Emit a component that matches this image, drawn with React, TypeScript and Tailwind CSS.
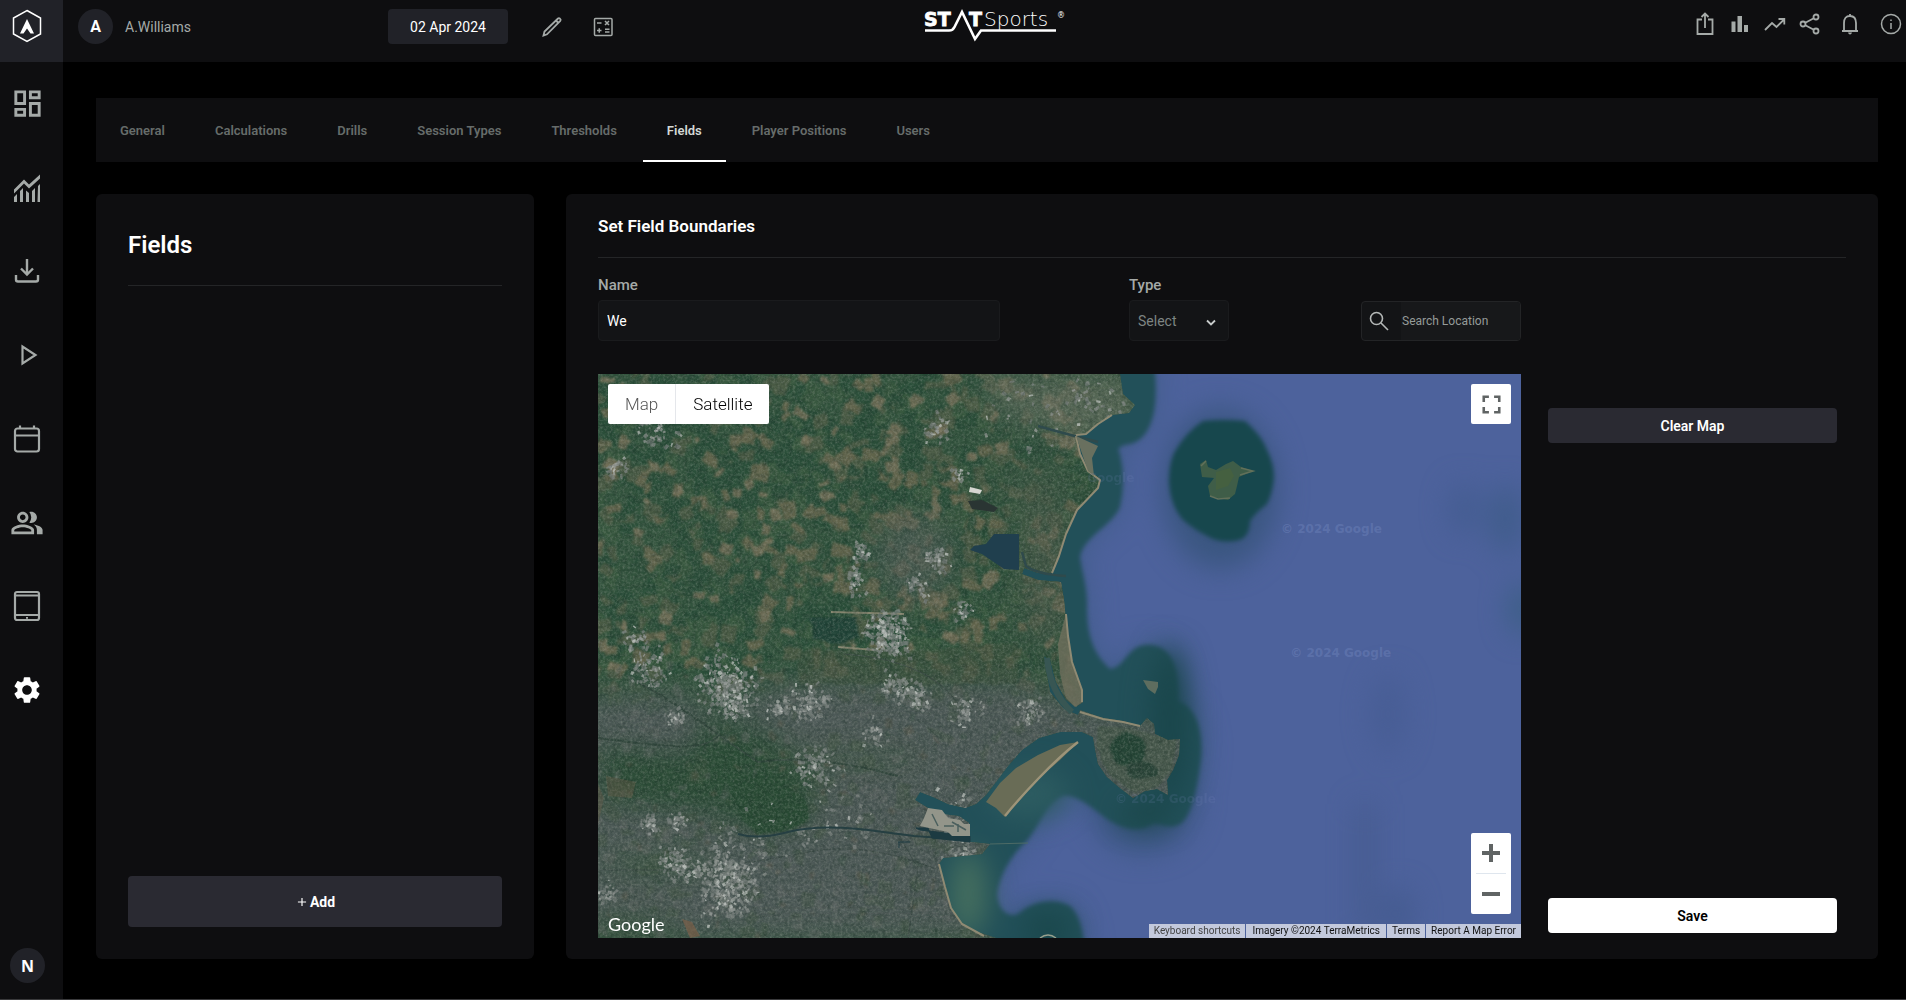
import { useState } from 'react';
import {
  MdOutlineDashboard,
  MdOutlinePeopleAlt,
  MdSettings,
  MdFullscreen,
  MdAdd,
} from 'react-icons/md';

type Point = [number, number];

const TABS = ['General', 'Calculations', 'Drills', 'Session Types', 'Thresholds', 'Fields', 'Player Positions', 'Users'];

const ChartIcon = () => (
  <svg width="28" height="28" viewBox="0 0 28 28" fill="currentColor">
    <path d="M1 15.5 L11 5.5 L16 10.5 L27 0.5 V4.5 L16 14.5 L11 9.5 L1 19.5 Z" />
    <path d="M1 23 l3-3 V28 H1 Z M7 17 l3-3 V28 H7 Z M13 16.500 l3 2.500 V28 H13 Z M19 17 l3-3 V28 H19 Z M25 12 l2-2 V28 H24.500 Z" />
  </svg>
);

const DownloadIcon = () => (
  <svg width="26" height="26" viewBox="0 0 26 26" fill="none" stroke="currentColor" strokeWidth="2.400">
    <path d="M13 1 V16 M7 10.500 L13 16.500 L19 10.500 M2 17 V21.500 Q2 23.500 4 23.500 H22 Q24 23.500 24 21.500 V17" />
  </svg>
);

const PlayIcon = () => (
  <svg width="28" height="28" viewBox="0 0 28 28" fill="none" stroke="currentColor" strokeWidth="2.200">
    <path d="M9.500 5.500 V22.500 L22.500 14 Z" />
  </svg>
);

const CalendarIcon = () => (
  <svg width="28" height="30" viewBox="0 0 28 30" fill="none" stroke="currentColor" strokeWidth="2.200">
    <rect x="2" y="4.500" width="24" height="23" rx="2.500" />
    <path d="M2 11.500 H26 M7 1.500 V5 M21 1.500 V5" />
  </svg>
);

const TabletIcon = () => (
  <svg width="28" height="32" viewBox="0 0 28 32" fill="none" stroke="currentColor" strokeWidth="2.200">
    <rect x="2" y="2" width="24" height="28" rx="2" />
    <path d="M2 5.500 H26 M2 25 H26 M13 27.800 H15" strokeWidth="1.800" />
  </svg>
);

const NAV = [
  { label: 'Dashboard', icon: <MdOutlineDashboard size={35} /> },
  { label: 'Analysis', icon: <ChartIcon /> },
  { label: 'Download', icon: <DownloadIcon /> },
  { label: 'Live', icon: <PlayIcon /> },
  { label: 'Calendar', icon: <CalendarIcon /> },
  { label: 'Squad', icon: <MdOutlinePeopleAlt size={34} /> },
  { label: 'Devices', icon: <TabletIcon /> },
  { label: 'Settings', icon: <MdSettings size={32} />, active: true },
];

const iconProps = {
  width: 24,
  height: 24,
  viewBox: '0 0 24 24',
  fill: 'none',
  stroke: 'currentColor',
  strokeWidth: 1.5,
};

const HEADER_ICONS = [
  {
    label: 'Export',
    icon: (
      <svg {...iconProps} strokeWidth={1.8}>
        <path d="M9 7.500 H4.500 V22 H19.500 V7.500 H15 M12 2 V16 M8.500 5 L12 1.500 L15.500 5" />
      </svg>
    ),
  },
  {
    label: 'Reports',
    icon: (
      <svg {...iconProps} fill="currentColor" stroke="none">
        <path d="M3.500 9.500 h4 V20 h-4 Z M9.500 4 h4.500 V20 h-4.500 Z M16 13 h4 V20 h-4 Z" />
      </svg>
    ),
  },
  {
    label: 'Trends',
    icon: (
      <svg {...iconProps} strokeWidth={1.8}>
        <path d="M2 18 L9 11 L13.500 15 L21 7.500 M15.500 7 H21.300 V12.500" />
      </svg>
    ),
  },
  {
    label: 'Share',
    icon: (
      <svg {...iconProps} strokeWidth={1.8}>
        <circle cx="5" cy="12" r="2.500" />
        <circle cx="18" cy="5" r="2.500" />
        <circle cx="18" cy="19" r="2.500" />
        <path d="M7.300 10.800 L15.800 6.200 M7.300 13.200 L15.800 17.800" />
      </svg>
    ),
  },
];

// ---- satellite imagery ----

function createRandom(seed: number) {
  let s = seed;
  return () => {
    s = (s * 1664525 + 1013904223) % 4294967296;
    return s / 4294967296;
  };
}

const rand = createRandom(2024);
const gauss = () => rand() + rand() + rand() - 1.5;

const quad = (x: number, y: number, w: number, h: number, angle: number) => {
  const c = Math.cos(angle);
  const s = Math.sin(angle);
  const corners: Point[] = [[-w, -h], [w, -h * (0.6 + rand() * 0.5)], [w * (0.6 + rand() * 0.5), h], [-w, h]];
  return 'M' + corners.map(([a, b]) => `${(x + (a * c - b * s) / 2).toFixed(1)} ${(y + (a * s + b * c) / 2).toFixed(1)}`).join('L') + 'Z';
};

const buildPatches = (count: number, size: number, top: number, bottom: number) => {
  let d = '';
  for (let i = 0; i < count; i++) {
    const y = top + rand() * (bottom - top);
    d += quad(rand() * 500, y, size * (0.4 + rand()), size * (0.4 + rand() * 0.9), (rand() - 0.3) * 1.2);
  }
  return d;
};

const FARMLAND = [
  { fill: '#2a4f3a', d: buildPatches(330, 24, 0, 300) },
  { fill: '#3b5a41', d: buildPatches(260, 16, 0, 310) },
  { fill: '#4f5d47', d: buildPatches(260, 14, 0, 320) },
  { fill: '#68674f', d: buildPatches(170, 14, 0, 300) },
  { fill: '#2a4d39', d: buildPatches(200, 12, 0, 310) },
  { fill: '#78725b', d: buildPatches(90, 11, 0, 300) },
];

const URBAN = [
  { fill: '#435744', d: buildPatches(190, 11, 310, 564) },
  { fill: '#666b6a', d: buildPatches(240, 8, 290, 564) },
  { fill: '#384f40', d: buildPatches(140, 7, 290, 564) },
  { fill: '#5e5a4b', d: buildPatches(90, 6, 290, 564) },
];

// x, y, spread, amount
const CLUSTERS: [number, number, number, number][] = [
  [127, 308, 26, 110], [138, 330, 18, 60], [212, 329, 18, 55], [131, 513, 30, 130], [118, 498, 22, 50],
  [216, 391, 18, 40], [320, 322, 12, 32], [296, 312, 14, 28], [51, 295, 18, 36], [341, 184, 12, 26],
  [290, 262, 20, 130], [78, 343, 10, 20], [263, 178, 10, 14], [258, 208, 12, 18], [367, 338, 14, 28],
  [433, 338, 12, 24], [78, 492, 16, 40], [61, 57, 18, 26], [50, 450, 10, 16], [80, 450, 10, 16],
  [320, 213, 12, 16], [362, 100, 7, 10], [365, 237, 10, 14], [8, 520, 12, 16], [140, 470, 40, 24],
  [182, 333, 12, 24], [340, 54, 14, 16], [430, 20, 60, 20], [500, 30, 34, 20], [277, 360, 12, 16],
  [18, 94, 12, 12], [40, 268, 12, 16], [350, 440, 20, 30], [360, 475, 16, 22], [240, 440, 50, 24],
];

const buildSpeckles = (size: number, share: number) => {
  let d = '';
  CLUSTERS.forEach(([cx, cy, spread, amount]) => {
    for (let i = 0; i < amount * share; i++) {
      d += quad(cx + gauss() * spread, cy + gauss() * spread, size * (0.5 + rand()), size * (0.4 + rand() * 0.8), rand() * 3);
    }
  });
  return d;
};

const SPECKLES = [
  { fill: '#7d8481', d: buildSpeckles(4, 0.9) },
  { fill: '#9ca09e', d: buildSpeckles(3, 0.6) },
  { fill: '#c6c9c5', d: buildSpeckles(3, 0.25) },
];

const SHALLOWS =
  'M440 -20H555Q560 16 556 38Q550 66 532 70Q516 72 522 80Q528 106 522 133C514 152 486 162 482 183C484 198 489 212 489 230C488 268 500 284 512 295C526 294 530 272 547 271C570 269 582 288 580 327C600 334 605 360 603 384C600 410 594 446 580 451C568 456 562 447 553 451C540 459 524 455 509 445C494 434 478 420 465 422C448 428 444 448 429 467C414 480 402 500 399 520C400 536 410 544 420 540C436 526 458 524 472 532C482 542 484 552 490 590H300V300Z';

const ISLAND_SHALLOWS =
  'M605 47Q626 45 647 47Q664 62 669 76Q676 90 676 103Q675 118 669 130Q658 138 652 147Q652 160 644 165Q630 170 615 165Q596 156 584 145Q572 130 571 108Q571 90 576 79Q588 58 605 47Z';

const MAINLAND =
  'M0 0H522L525 20L537 31L531 39L514 41L500 50L488 59L478 61L481 78L490 97L502 104L500 114L479 136L468 160L461 182L454 199L440 199L426 194L424 200L440 206L463 208L466 226L469 256L473 283L483 312L485 328L478 333L468 326L458 308L452 286L446 282L452 318L466 335L480 341L482 336L505 344L525 347L542 352L549 344L556 350L557 360L570 366L582 365L581 381L575 396L569 406L570 421L559 415L547 417L535 424L522 414L509 403L500 390L497 375L495 363L484 358L462 358L441 364L424 376L410 392L398 408L388 421L378 430L367 434L350 430L335 423L322 418L317 426L330 434L343 440L361 442L371 449L372 464L355 466L392 470L384 480L345 484L341 490L347 513L352 532L362 548L380 558L398 564H0Z';

const BULL_ISLAND = 'M480 368L462 371L440 381L418 394L402 409L388 428L398 434L407 443L422 426L440 405L462 386Z';

const SAND = [
  'M514 41L500 50L488 60L478 61',
  'M478 62L482 80L490 97L502 106L500 114L479 136L468 160L461 182L454 199',
  'M468 240L470 262L474 288L484 316L484 328',
  'M482 338L505 345L525 348L542 352',
  'M341 490L347 513L353 534L364 550L386 562',
];

const SatelliteImage = () => (
  <svg className="absolute inset-0 h-full w-full" viewBox="0 0 923 564" preserveAspectRatio="none" aria-hidden="true">
    <defs>
      <filter id="soft-1" x="-5%" y="-5%" width="110%" height="110%" colorInterpolationFilters="sRGB">
        <feGaussianBlur stdDeviation="0.7" />
      </filter>
      <filter id="soft-2" x="-20%" y="-20%" width="140%" height="140%" colorInterpolationFilters="sRGB">
        <feGaussianBlur stdDeviation="2" />
      </filter>
      <filter id="soft-16" x="-40%" y="-40%" width="180%" height="180%" colorInterpolationFilters="sRGB">
        <feGaussianBlur stdDeviation="14" />
      </filter>
      <filter id="patch" x="0" y="0" width="100%" height="100%" colorInterpolationFilters="sRGB">
        <feTurbulence type="fractalNoise" baseFrequency="0.08" numOctaves="2" seed="3" />
        <feDisplacementMap in="SourceGraphic" scale="6" xChannelSelector="R" yChannelSelector="G" />
        <feGaussianBlur stdDeviation="0.8" />
      </filter>
      <filter id="light-grain" x="0" y="0" width="100%" height="100%" colorInterpolationFilters="sRGB">
        <feTurbulence type="fractalNoise" baseFrequency="0.4" numOctaves="4" seed="8" />
        <feColorMatrix values="0 0 0 0 0.68  0 0 0 0 0.7  0 0 0 0 0.66  1.8 0 0 0 -0.72" />
      </filter>
      <filter id="dark-grain" x="0" y="0" width="100%" height="100%" colorInterpolationFilters="sRGB">
        <feTurbulence type="fractalNoise" baseFrequency="0.2" numOctaves="4" seed="21" />
        <feColorMatrix values="0 0 0 0 0.08  0 0 0 0 0.16  0 0 0 0 0.13  0 2 0 0 -0.75" />
      </filter>
      <clipPath id="land">
        <path d={MAINLAND} />
      </clipPath>
    </defs>

    <rect width="923" height="564" fill="#4d629c" />
    <g filter="url(#soft-16)">
      <path d={SHALLOWS} fill="#3d5b84" opacity="0.8" />
      <ellipse cx="622" cy="115" rx="58" ry="80" fill="#3a5680" />
      <ellipse cx="545" cy="430" rx="52" ry="48" fill="#3a5680" />
      <rect x="760" y="430" width="14" height="134" fill="#43598b" />
      <ellipse cx="790" cy="340" rx="16" ry="40" fill="#475d94" />
      <ellipse cx="866" cy="135" rx="14" ry="26" fill="#435c90" />
      <ellipse cx="908" cy="145" rx="16" ry="34" fill="#3f5c8a" />
      <ellipse cx="925" cy="235" rx="14" ry="26" fill="#3b5e84" />
      <ellipse cx="800" cy="540" rx="14" ry="26" fill="#435a8e" />
    </g>

    <path d={SHALLOWS} fill="#225059" filter="url(#soft-2)" />
    <path d={ISLAND_SHALLOWS} fill="#17474d" filter="url(#soft-2)" />
    <g filter="url(#soft-16)">
      <ellipse cx="572" cy="350" rx="20" ry="80" fill="#1a464b" />
      <ellipse cx="548" cy="440" rx="26" ry="12" fill="#1a4548" />
      <ellipse cx="370" cy="520" rx="18" ry="44" fill="#47705f" />
      <ellipse cx="430" cy="420" rx="40" ry="24" fill="#2d5c61" />
      <ellipse cx="450" cy="555" rx="26" ry="16" fill="#19464a" />
    </g>

    <g clipPath="url(#land)">
      <rect width="600" height="564" fill="#33543e" />
      <g filter="url(#patch)">
        {FARMLAND.map(({ fill, d }) => <path key={fill} d={d} fill={fill} opacity="0.85" />)}
      </g>
      <g filter="url(#soft-16)">
        <path d="M-20 326L70 318L120 336L180 312L230 308L340 310L400 306L470 324L600 350V564H-20Z" fill="#505b5a" opacity="0.95" />
        <path d="M380 0H540V60L480 70L400 40Z" fill="#656f5f" opacity="0.7" />
        <ellipse cx="316" cy="182" rx="40" ry="42" fill="#535e58" opacity="0.7" />
        <ellipse cx="446" cy="190" rx="26" ry="90" fill="#525e4f" opacity="0.6" />
        <ellipse cx="430" cy="110" rx="44" ry="24" fill="#3a5642" opacity="0.7" />
        <path d="M110 340L180 362L220 395L210 452L150 456L110 440L0 430V370L90 380Z" fill="#2c4d37" />
        <ellipse cx="60" cy="490" rx="60" ry="10" fill="#36543d" />
        <ellipse cx="30" cy="560" rx="50" ry="20" fill="#385340" />
        <ellipse cx="250" cy="385" rx="80" ry="8" fill="#405846" />
      </g>
      <g filter="url(#patch)">
        {URBAN.map(({ fill, d }) => <path key={fill} d={d} fill={fill} opacity="0.4" />)}
        <path d="M140 400L176 402L206 424L212 444L196 456L160 460L144 444L134 424Z" fill="#2a4b35" />
        <path d="M212 243H258L262 262L240 270L214 266Z" fill="#224539" />
        <path d="M200 276H330L420 268V310H200Z" fill="#40543f" opacity="0.6" />
        <path d="M500 352L540 356L580 366L572 400L560 412L536 420L508 398L498 372Z" fill="#48594d" />
        <ellipse cx="530" cy="376" rx="18" ry="16" fill="#254536" />
        <ellipse cx="544" cy="396" rx="16" ry="9" fill="#2c463a" />
      </g>
      <path d="M233 238L306 240M240 273L276 276" stroke="#86866f" strokeWidth="2" fill="none" />
      <path d="M0 364Q40 370 76 372T122 360M40 308Q80 330 122 362L160 388Q220 380 300 402" stroke="#30453b" strokeWidth="2" fill="none" opacity="0.8" />
      <path d="M0 496H90Q150 490 210 478T350 500M246 280Q330 286 360 330M300 460L320 494L310 564" stroke="#3a4845" strokeWidth="1.200" fill="none" opacity="0.7" />
      <g filter="url(#soft-1)">
        {SPECKLES.map(({ fill, d }) => <path key={fill} d={d} fill={fill} opacity="0.75" />)}
      </g>
      <rect width="600" height="564" filter="url(#dark-grain)" opacity="0.32" />
      <rect width="600" height="564" filter="url(#light-grain)" opacity="0.32" />
      <path d="M0 410L6 424L0 450Z M8 402L38 408L34 424L10 422Z" fill="#6d5c48" opacity="0.35" />
      <path d="M84 545L94 548L102 562L92 564Z" fill="#7a6048" opacity="0.7" />
    </g>

    <g filter="url(#soft-1)">
      <path d="M396 160L421 160V196L406 195L384 180L372 176L376 172L388 170Z" fill="#203f4e" />
      <path d="M370 127L384 126L400 134L396 138L374 135Z" fill="#2a3533" />
      <path d="M372 113L384 116L382 120L371 118Z" fill="#d5d6d0" />
      <path d="M424 178L428 192Q438 200 468 202M440 52Q468 60 500 68" stroke="#2f4a4c" strokeWidth="2.500" fill="none" />
      <path d="M449 284Q452 318 474 338" stroke="#385653" strokeWidth="6" fill="none" />
      <path d="M140 460Q160 466 190 458T270 456L316 462L372 466" stroke="#263f42" strokeWidth="2" fill="none" />
      <path d="M318 454H330L334 464L372 468V462L322 456Z M300 468H312M301 468V474" fill="#1d3b42" stroke="#1d3b42" />
      <path d="M330 434L344 436L350 444L362 446L366 450H372V462H354L350 458L322 452L326 444Z" fill="#93958a" />
      <path d="M346 452H356M354 448L368 456M334 440L340 452M360 450V458" stroke="#4c605e" strokeWidth="1.500" />
      <path d="M392 470L430 469" stroke="#4d6b66" strokeWidth="1.200" />

      <path d="M468 240L470 262L474 288L484 316L485 328L477 333L468 324L462 300L460 270Z" fill="#6f6f5c" opacity="0.8" />
      <path d={BULL_ISLAND} fill="#696c56" />
      <path d="M480 368Q462 382 440 405T407 442" stroke="#9d9479" strokeWidth="2.500" fill="none" />
      {SAND.map((d) => <path key={d} d={d} stroke="#8f8a73" strokeWidth="2" fill="none" strokeLinejoin="round" />)}
      <path d="M478 62L490 97L496 102L494 84L500 72Z" fill="#69705f" />

      <path d="M602 90L608 86L610 93L618 96L628 90L635 87L643 93L655 97L641 103L639 112L637 120L630 126L620 124L612 122L610 112L616 104L604 103Z" fill="#3f5d48" />
      <path d="M618 98L632 94L636 102L630 112L618 116Z" fill="#456040" />
      <path d="M643 94L655 97L642 101M612 122L620 125L632 124M603 92L608 87" stroke="#62705a" strokeWidth="1.500" fill="none" />
      <path d="M545 306L560 308V313L557 320L550 315Z" fill="#5e6d5f" />
      <path d="M442 564Q450 558 458 564" stroke="#98a08e" strokeWidth="1.500" fill="none" />
    </g>
  </svg>
);

const StatSportsLogo = () => (
  <svg className="overflow-visible" width="142" height="34" viewBox="0 0 142 34" role="img" aria-label="STATSports">
    <g fill="#ffffff" fontFamily="'DejaVu Sans', sans-serif">
      <text x="0" y="17" fontSize="19" fontWeight="700" stroke="#ffffff" strokeWidth="0.800">ST</text>
      <text x="45" y="17" fontSize="19" fontWeight="700" stroke="#ffffff" strokeWidth="0.800">T</text>
      <text x="60" y="17" fontSize="20" fontWeight="200">Sports</text>
      <text x="133" y="9" fontSize="8">®</text>
    </g>
    <path d="M1 21.500 H25 Q29 21.500 30.500 18 L38 3 L51 30 L57 21.500 H132" fill="none" stroke="#ffffff" strokeWidth="2.600" />
  </svg>
);

function FieldMap() {
  const [mapType, setMapType] = useState('Satellite');

  return (
    <div className="relative min-h-[564px] flex-1 overflow-hidden bg-[#4d629c]">
      <SatelliteImage />
      <span className="absolute left-[53%] top-[17%] font-['DejaVu_Sans'] text-xs font-bold text-[#7d90c4]/15">Google</span>
      <span className="absolute left-[74%] top-[26%] font-['DejaVu_Sans'] text-xs font-bold text-[#8296cc]/30">© 2024 Google</span>
      <span className="absolute left-[75%] top-[48%] font-['DejaVu_Sans'] text-xs font-bold text-[#8296cc]/30">© 2024 Google</span>
      <span className="absolute left-[56%] top-[74%] font-['DejaVu_Sans'] text-xs font-bold text-[#7d90c4]/15">© 2024 Google</span>

      <div className="absolute left-[10px] top-[10px] flex h-10 overflow-hidden rounded-xs bg-white text-[17px] font-light">
        {['Map', 'Satellite'].map((type) => (
          <button
            key={type}
            onClick={() => setMapType(type)}
            className={`cursor-pointer px-[17px] pt-px ${type === mapType ? 'border-l border-gray-200 text-black' : 'text-[#565656]'}`}
          >
            {type}
          </button>
        ))}
      </div>

      <button aria-label="Toggle fullscreen view" className="absolute right-[10px] top-[10px] flex size-10 cursor-pointer items-center justify-center rounded-xs bg-white text-[#606464]">
        <MdFullscreen size={31} />
      </button>

      <div className="absolute bottom-6 right-[10px] flex w-10 flex-col items-center rounded-xs bg-white text-[#606464]">
        <button aria-label="Zoom in" className="flex size-10 cursor-pointer items-center justify-center">
          <svg width="18" height="18" viewBox="0 0 18 18" fill="currentColor"><path d="M7 0h4v7h7v4h-7v7H7v-7H0V7h7z" /></svg>
        </button>
        <div className="h-px w-[30px] bg-[#dfe6ee]" />
        <button aria-label="Zoom out" className="flex size-10 cursor-pointer items-center justify-center">
          <svg width="18" height="4" viewBox="0 0 18 4" fill="currentColor"><path d="M0 0h18v4H0z" /></svg>
        </button>
      </div>

      <span className="absolute bottom-0 left-[10px] font-['Lato'] text-lg leading-7 text-white">Google</span>
      <div className="absolute bottom-0 right-0 flex h-[14px] gap-px text-[10px] leading-[14px] text-[#111111]">
        <button className="cursor-pointer bg-[#c3c9dc] px-[5px] text-[#444444]">Keyboard shortcuts</button>
        <span className="bg-[#c3c9dc] px-[6px]">Imagery ©2024 TerraMetrics</span>
        <a href="#terms" className="bg-[#c3c9dc] px-[5px]">Terms</a>
        <a href="#report" className="bg-[#c3c9dc] px-[5px]">Report A Map Error</a>
      </div>
    </div>
  );
}

export default function App() {
  const [activeTab, setActiveTab] = useState('Fields');
  const [name, setName] = useState('We');

  return (
    <div className="flex min-h-screen border-b border-[#3a3a3c] bg-black font-['Roboto',sans-serif] text-sm text-white">
      <aside className="flex w-[63px] shrink-0 flex-col items-start bg-[#0e0e10]">
        <a href="#home" aria-label="Home" className="flex h-[62px] w-full items-center bg-[#212228] pb-[10px] pl-3">
          <svg width="30" height="34" viewBox="0 0 30 34" fill="none">
            <path d="M15 1.500 L28.500 9 V25 L15 32.500 L1.500 25 V9 Z" stroke="#ffffff" strokeWidth="1.500" />
            <path d="M15 10 L22 24.500 H18.500 L15 19.500 L11.500 24.500 H8 Z" fill="#ffffff" />
          </svg>
        </a>
        <nav className="grid h-[670px] w-[54px] auto-rows-fr">
          {NAV.map(({ label, icon, active }) => (
            <button
              key={label}
              aria-label={label}
              className={`flex cursor-pointer items-center justify-center ${active ? 'text-white' : 'text-[#a5aaa8]'}`}
            >
              {icon}
            </button>
          ))}
        </nav>
        <div className="mb-4 ml-[10px] mt-auto flex size-[35px] items-center justify-center rounded-full bg-[#212228] font-['Open_Sans'] text-base font-bold">
          N
        </div>
      </aside>

      <div className="flex min-w-0 flex-1 flex-col">
        <header className="grid h-[62px] grid-cols-[1fr_auto_1fr] items-start bg-[#0e0e10] pt-[9px] text-[#a5aaa8]">
          <div className="flex items-center pl-[15px]">
            <div className="flex size-[35px] items-center justify-center rounded-full bg-[#212228] text-base font-bold text-white">A</div>
            <span className="ml-3 w-[263px]">A.Williams</span>
            <button className="h-[35px] w-[120px] cursor-pointer rounded-sm bg-[#212228] text-white">02 Apr 2024</button>
            <button aria-label="Edit" className="ml-8 cursor-pointer">
              <svg {...iconProps} strokeWidth={1.8}>
                <path d="M3.500 20.500 L4.500 16.500 L18 3.500 Q19 2.700 20 3.700 Q21.200 4.800 20.300 5.800 L7 19.300 Z M16 5.500 L18.500 8" />
              </svg>
            </button>
            <button aria-label="Calculations" className="ml-[27px] cursor-pointer">
              <svg {...iconProps}>
                <rect x="3.500" y="3.500" width="17.500" height="17" rx="1" />
                <path d="M6 8 H10.500 M14 6 L18 10 M18 6 L14 10 M6 15.500 H10.500 M8.250 13.200 V17.800 M14 14.300 H18.500 M14 17 H18.500" />
              </svg>
            </button>
          </div>
          <div className="pl-5">
            <StatSportsLogo />
          </div>
          <div className="flex items-center justify-end gap-[11px] pr-[3px] pt-[3px]">
            {HEADER_ICONS.map(({ label, icon }) => (
              <button key={label} aria-label={label} className="cursor-pointer">{icon}</button>
            ))}
            <button aria-label="Notifications" className="ml-[5px] cursor-pointer">
              <svg {...iconProps} strokeWidth={1.8}>
                <path d="M4 19 H20 M6 19 V11 Q6 4 12 4 Q18 4 18 11 V19 M12 2 V4" />
                <path d="M10 20.500 H14 Q13.500 22.500 12 22.500 Q10.500 22.500 10 20.500 Z" fill="currentColor" stroke="none" />
              </svg>
            </button>
            <button aria-label="Information" className="ml-[6px] cursor-pointer">
              <svg {...iconProps}>
                <circle cx="12" cy="12" r="9.500" />
                <path d="M12 11 V17 M12 7.500 V9" />
              </svg>
            </button>
          </div>
        </header>

        <main className="flex flex-1 flex-col gap-8 pb-10 pl-[33px] pr-7 pt-9">
          <nav className="flex h-16 shrink-0 gap-[2px] bg-[#0e0e10] text-[13px] font-semibold">
            {TABS.map((tab) => (
              <button
                key={tab}
                onClick={() => setActiveTab(tab)}
                className={`cursor-pointer border-b-2 px-6 pt-1 ${tab === activeTab ? 'border-white text-[#d4d8d6]' : 'border-transparent text-[#666c6a]'}`}
              >
                {tab}
              </button>
            ))}
          </nav>

          <div className="flex flex-1 gap-8">
            <section className="flex w-[438px] shrink-0 flex-col rounded-md bg-[#0e0e10] p-8">
              <h1 className="border-b border-[#242527] pb-6 pt-[3px] text-2xl font-semibold leading-8">Fields</h1>
              <button className="mt-auto h-[51px] cursor-pointer rounded-sm bg-[#2a2a32] pt-[2px] font-bold">
                <span className="inline-flex items-center gap-px"><MdAdd size={14} />Add</span>
              </button>
            </section>

            <section className="flex min-w-0 flex-1 flex-col rounded-md bg-[#0e0e10] px-8 pb-[21px] pt-5">
              <h2 className="border-b border-[#242527] pb-[19px] text-[17px] font-semibold leading-6">Set Field Boundaries</h2>
              <div className="flex flex-1">
                <div className="flex min-w-0 flex-1 flex-col">
                  <div className="flex items-end pb-[33px] pt-[15px]">
                    <div className="flex min-w-0 flex-1 flex-col">
                      <label htmlFor="field-name" className="text-[15px] font-medium leading-6 text-[#a5aaa8]">Name</label>
                      <input
                        id="field-name"
                        type="text"
                        className="mt-[3px] h-[41px] w-full max-w-[402px] rounded-sm border border-[#1a1b1d] bg-[#131416] px-2 text-sm text-white focus:outline-none"
                        value={name}
                        onChange={(e) => setName(e.target.value)}
                      />
                    </div>
                    <div className="relative mr-[132px] flex w-[100px] flex-col">
                      <label htmlFor="field-type" className="text-[15px] font-medium leading-6 text-[#a5aaa8]">Type</label>
                      <select
                        id="field-type"
                        className="mt-[3px] h-[41px] cursor-pointer appearance-none rounded-sm border border-[#1a1b1d] bg-[#131416] px-2 text-sm text-[#7e8583]"
                      >
                        <option>Select</option>
                      </select>
                      <svg className="pointer-events-none absolute bottom-[14px] right-[13px]" width="10" height="8" viewBox="0 0 10 8" fill="none" stroke="#c8cccb" strokeWidth="1.800">
                        <path d="M1 1.500 L5 5.500 L9 1.500" />
                      </svg>
                    </div>
                    <div className="flex h-10 w-40 items-center overflow-hidden rounded-sm border border-[#232426] bg-[#131416]">
                      <label htmlFor="location" aria-label="Search Location" className="flex w-[39px] shrink-0 justify-center pr-[6px] text-[#b4b8b7]">
                        <svg width="20" height="20" viewBox="0 0 20 20" fill="none" stroke="currentColor" strokeWidth="1.600">
                          <circle cx="7.500" cy="7.500" r="6" />
                          <path d="M12 12 L19 19" />
                        </svg>
                      </label>
                      <input
                        id="location"
                        type="text"
                        placeholder="Search Location"
                        className="h-full w-full min-w-0 bg-[#17181a] px-px text-xs text-white placeholder:text-[#959b99] focus:outline-none"
                      />
                    </div>
                  </div>
                  <FieldMap />
                </div>

                <div className="flex w-[325px] shrink-0 flex-col justify-between pb-[5px] pl-[27px] pr-[9px] pt-[150px] font-semibold">
                  <button className="h-[35px] cursor-pointer rounded-sm bg-[#2a2a32] text-white">Clear Map</button>
                  <button className="h-[35px] cursor-pointer rounded-sm bg-white text-black">Save</button>
                </div>
              </div>
            </section>
          </div>
        </main>
      </div>
    </div>
  );
}
